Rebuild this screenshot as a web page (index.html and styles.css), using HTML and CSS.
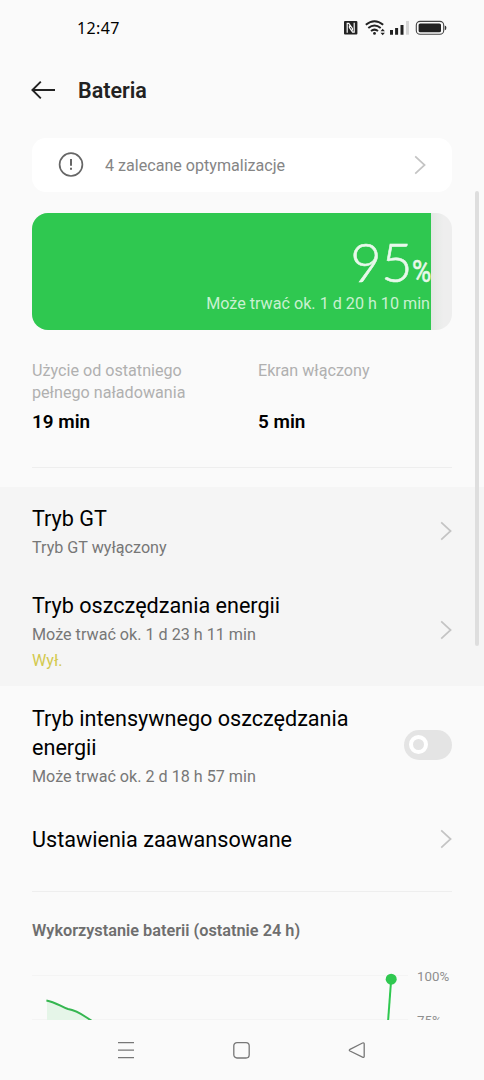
FILE: index.html
```html
<!DOCTYPE html>
<html lang="pl">
<head>
    <meta charset="UTF-8">
    <meta name="viewport" content="width=device-width, initial-scale=1.0">
    <title>Bateria</title>
    <link rel="stylesheet" href="styles.css">
</head>
<body>
    <div class="screen">
        <div class="status-bar">
            <span class="clock">12:47</span>
            <svg class="status-icons" width="104" height="16" viewBox="0 0 104 16">
                <!-- nfc -->
                <rect x="1" y="1" width="13.4" height="13.6" rx="1" fill="#222"/>
                <path d="M4.2 12.8V3.4H5.8L9.4 8.4V10.4M11.2 2.8V12.2H9.6L6.4 7.6V5.4" fill="none" stroke="#fafafa" stroke-width="1.2"/>
                <!-- wifi -->
                <g fill="none" stroke="#222" stroke-width="2">
                    <path d="M22.8 4.8Q31.5 -2.4 40.2 4.8"/>
                    <path d="M25.3 8Q31.5 3 37.7 8"/>
                    <path d="M28 11Q31.5 8.3 35 11"/>
                </g>
                <circle cx="31.5" cy="13.4" r="1.4" fill="#222"/>
                <path d="M37.5 11.3L39.7 8.8L41.9 11.3ZM37.5 12.7H41.9L39.7 15.2Z" fill="#222"/>
                <!-- signal -->
                <path d="M48.5 14.7V10M53.6 14.7V8M59 14.7V5" stroke="#222" stroke-width="3"/>
                <path d="M64.5 14.7V1" stroke="#d6d6d6" stroke-width="3"/>
                <!-- battery -->
                <rect x="73.3" y="1.4" width="27.4" height="12.8" rx="3.8" fill="none" stroke="#444" stroke-width="1.1"/>
                <rect x="75.6" y="3.4" width="22.4" height="8.9" rx="1.6" fill="#222"/>
                <path d="M101.8 5.4Q103.4 5.6 103.4 7.8T101.8 10.2Z" fill="#333"/>
            </svg>
        </div>

        <div class="header">
            <svg width="26" height="20" viewBox="0 0 26 20" fill="none" stroke="#222" stroke-width="1.9">
                <path d="M10.8 1.6L2.4 10L10.8 18.4M2.4 10H25"/>
            </svg>
            <h1>Bateria</h1>
        </div>

        <div class="content">
            <div class="tips">
                <svg width="26" height="26" viewBox="0 0 26 26" fill="none" stroke="#666">
                    <circle cx="13" cy="12.6" r="11.4" stroke-width="1.7"/>
                    <path d="M13 7V13.8M13 15.8V17.8" stroke-width="2"/>
                </svg>
                <span class="tips-text">4 zalecane optymalizacje</span>
                <svg class="arrow" viewBox="0 0 12 20"><path d="M1.2 1.4L10.6 10L1.2 18.6"/></svg>
            </div>

            <div class="battery">
                <div class="level" style="width: 95%">
                    <div class="percent">95<span class="sign">%</span></div>
                    <div class="remaining">Może trwać ok. 1 d 20 h 10 min</div>
                </div>
            </div>

            <div class="stats">
                <div class="stat">
                    <p>Użycie od ostatniego pełnego naładowania</p>
                    <strong>19 min</strong>
                </div>
                <div class="stat">
                    <p>Ekran włączony</p>
                    <strong>5 min</strong>
                </div>
            </div>
            <hr>
        </div>

        <div class="modes">
            <div class="row row-gt">
                <div class="text">
                    <h2>Tryb GT</h2>
                    <p>Tryb GT wyłączony</p>
                </div>
                <svg class="arrow" viewBox="0 0 12 20"><path d="M1.2 1.4L10.6 10L1.2 18.6"/></svg>
            </div>
            <div class="row row-saver">
                <div class="text">
                    <h2>Tryb oszczędzania energii</h2>
                    <p>Może trwać ok. 1 d 23 h 11 min</p>
                    <p class="off">Wył.</p>
                </div>
                <svg class="arrow" viewBox="0 0 12 20"><path d="M1.2 1.4L10.6 10L1.2 18.6"/></svg>
            </div>
        </div>

        <div class="row row-super">
            <div class="text">
                <h2>Tryb intensywnego oszczędzania energii</h2>
                <p>Może trwać ok. 2 d 18 h 57 min</p>
            </div>
            <div class="toggle"><span class="knob"></span></div>
        </div>
        <div class="row row-advanced">
            <div class="text">
                <h2>Ustawienia zaawansowane</h2>
            </div>
            <svg class="arrow" viewBox="0 0 12 20"><path d="M1.2 1.4L10.6 10L1.2 18.6"/></svg>
        </div>

        <div class="usage">
            <hr>
            <h3>Wykorzystanie baterii (ostatnie 24 h)</h3>
            <div class="chart">
                <svg width="376" height="60" viewBox="0 0 376 60">
                    <path d="M0 15.5H376M0 59.5H376" stroke="#f4f4f4"/>
                    <path d="M15 40.5C24 42 29 47 36 49C46 50.5 52 56 60 61V66H15Z" fill="#e5f5e8"/>
                    <path d="M14.4 40.4C24 42 29 47 36 49C46 50.5 52 56 60 61" fill="none" stroke="#35b650" stroke-width="2"/>
                    <path d="M359.2 19L356 62" stroke="#2fc850" stroke-width="2"/>
                    <circle cx="359.2" cy="19.2" r="5.5" fill="#2fc850"/>
                </svg>
                <div class="scale">
                    <span>100%</span>
                    <span>75%</span>
                </div>
            </div>
        </div>

        <div class="nav-bar">
            <svg width="18" height="18" viewBox="0 0 18 18"><path d="M1 1.7H17M1 9.2H17M1 16.7H17"/></svg>
            <svg width="18" height="18" viewBox="0 0 18 18"><rect x="0.8" y="1.6" width="15.4" height="15.4" rx="3.2"/></svg>
            <svg width="18" height="18" viewBox="0 0 18 18"><path d="M2 8.3L14.5 2Q16.2 1.4 16.2 3V15.2Q16.2 16.8 14.5 16.2L2 10Q0.6 9.1 2 8.3Z"/></svg>
        </div>
        <div class="scrollbar"></div>
    </div>
</body>
</html>
```

FILE: styles.css
```css
* {
    box-sizing: border-box;
}

body {
    margin: 0;
    font-family: Roboto, sans-serif;
    background-color: #fafafa;
    color: #000;
}

h1, h2, h3, p {
    margin: 0;
    font-weight: normal;
}

svg {
    display: block;
    flex-shrink: 0;
}

hr {
    border: none;
    height: 1px;
    margin: 0;
    background-color: #eeeeee;
}

.screen {
    position: relative;
    display: flex;
    flex-direction: column;
    width: 484px;
    height: 1080px;
    overflow: hidden;
}

.status-bar {
    display: flex;
    align-items: center;
    justify-content: space-between;
    height: 56px;
    padding: 0 37px 0 77px;
}

.clock {
    font-family: "Noto Sans", sans-serif;
    font-size: 16px;
    letter-spacing: 0.35px;
    line-height: 20px;
    padding-bottom: 1px;
}

.header {
    display: flex;
    align-items: center;
    gap: 22px;
    height: 68px;
    padding-left: 30px;
}

.header h1 {
    font-size: 21.5px;
    font-weight: 600;
    color: #222;
}

.content {
    padding: 14px 32px 0;
}

.tips {
    display: flex;
    align-items: center;
    height: 54px;
    padding: 0 26px;
    background-color: #fff;
    border-radius: 14px;
}

.tips-text {
    flex: 1;
    margin-left: 21px;
    font-size: 16.1px;
    color: #858585;
}

.arrow {
    width: 12px;
    height: 20px;
    fill: none;
    stroke: #c4c4c4;
    stroke-width: 1.7;
}

.battery {
    height: 117px;
    margin-top: 21px;
    border-radius: 16px;
    background: linear-gradient(to right, #e3e8e4 95%, #eeeeee 98%);
    overflow: hidden;
}

.level {
    height: 100%;
    padding-top: 20px;
    background-color: #2fc850;
    color: #e8f8eb;
    text-align: right;
}

.percent {
    display: flex;
    justify-content: flex-end;
    align-items: baseline;
    height: 59px;
    font-family: Lato, sans-serif;
    font-size: 54px;
    font-weight: 300;
    line-height: 58px;
    letter-spacing: -0.5px;
    -webkit-text-stroke: 0.6px #e8f8eb;
}

.sign {
    width: 20px;
    font-family: Roboto, sans-serif;
    font-size: 32px;
    font-weight: 400;
    line-height: 30px;
    transform: scaleX(0.82);
    transform-origin: left;
    margin-right: -1px;
}

.remaining {
    padding-right: 1px;
    font-size: 16.15px;
    line-height: 24px;
    color: #c9f1d1;
    white-space: nowrap;
}

.stats {
    display: grid;
    grid-template-columns: 226px 1fr;
    height: 108px;
    margin-top: 29px;
}

.stat {
    display: flex;
    flex-direction: column;
}

.stat p {
    width: 170px;
    height: 44px;
    padding-top: 1px;
    font-size: 16.15px;
    line-height: 22px;
    color: #b0b0b0;
}

.stat strong {
    margin-top: 7px;
    font-size: 18.9px;
    font-weight: 600;
    line-height: 24px;
}

.modes {
    margin-top: 19px;
    background-color: #f5f5f5;
}

.row {
    display: flex;
    align-items: center;
    justify-content: space-between;
    padding: 0 32px;
}

.row-gt {
    height: 87px;
}

.row-saver {
    height: 112px;
}

.row-super {
    height: 117px;
}

.row-advanced {
    height: 72px;
}

.text {
    width: 330px;
}

.text h2 {
    font-size: 21.6px;
    line-height: 29px;
}

.text h2 + p {
    margin-top: 2px;
}

.text p {
    font-size: 16.15px;
    line-height: 26px;
    color: #777;
}

.row-gt .text,
.row-saver .text,
.row-super .text {
    padding-top: 4px;
}

.text .off {
    color: #d3c94e;
}

.toggle {
    display: flex;
    align-items: center;
    width: 48px;
    height: 30px;
    padding-left: 5px;
    border-radius: 15px;
    background-color: #e4e4e4;
}

.knob {
    width: 19px;
    height: 19px;
    border: 4px solid #fff;
    border-radius: 50%;
}

.usage {
    flex: 1;
    min-height: 0;
    padding: 16px 32px 0;
    overflow: hidden;
}

.usage h3 {
    margin-top: 26px;
    font-size: 16.3px;
    font-weight: 600;
    line-height: 25px;
    color: #6e6e6e;
}

.chart {
    display: flex;
    gap: 9px;
    margin-top: 17px;
}

.scale {
    display: flex;
    flex-direction: column;
    gap: 28px;
    padding-top: 9px;
    font-size: 13.3px;
    line-height: 16px;
    color: #8e8e8e;
}

.nav-bar {
    display: flex;
    align-items: center;
    justify-content: space-between;
    height: 60px;
    padding: 0 118px 0 117px;
}

.nav-bar svg {
    fill: none;
    stroke: #777;
    stroke-width: 1.3;
}

.scrollbar {
    position: absolute;
    top: 191px;
    right: 5px;
    width: 4px;
    height: 455px;
    border-radius: 2px;
    background-color: #dedede;
}
```
